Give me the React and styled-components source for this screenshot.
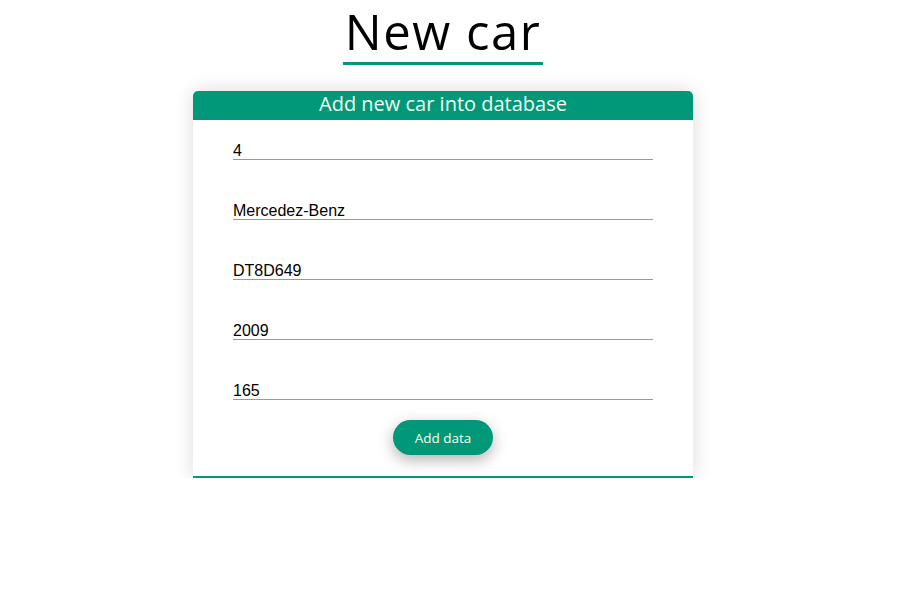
import styled, { createGlobalStyle } from "styled-components";

const GlobalStyle = createGlobalStyle`
  body {
    margin: 0;
    background: #fff;
    font-family: "Open Sans", sans-serif;
  }
`;

const fields = ["4", "Mercedez-Benz", "DT8D649", "2009", "165"];

const Page = styled.div`
  width: 886px;
  display: flex;
  flex-direction: column;
  align-items: center;
`;

const Title = styled.h1`
  margin: 0;
  font-family: "Open Sans", sans-serif;
  font-weight: 500;
  font-size: 49px;
  line-height: 62px;
  letter-spacing: 1.5px;
  color: #000;
  border-bottom: 3px solid #009879;
  padding: 0 2px;
`;

const Card = styled.div`
  width: 500px;
  margin-top: 26px;
  background: #fff;
  border-radius: 5px 5px 0 0;
  border-bottom: 2px solid #009879;
  box-shadow: 0 0 20px rgba(0, 0, 0, 0.15);
`;

const CardHeader = styled.div`
  height: 29px;
  line-height: 26px;
  background: #009879;
  color: #f4fbf2;
  text-align: center;
  font-size: 20px;
  border-radius: 5px 5px 0 0;
`;

const Form = styled.form`
  display: flex;
  flex-direction: column;
  align-items: center;
  gap: 40px;
  padding: 20px 0 21px;
`;

const Input = styled.input`
  width: 420px;
  box-sizing: border-box;
  height: 20px;
  padding: 2px 0 0;
  border: none;
  border-bottom: 1px solid #999;
  font-family: "Liberation Sans", Arial, sans-serif;
  font-size: 16px;
  line-height: 17px;
  color: #000;
  background: transparent;
  outline: none;
`;

const Button = styled.button`
  width: 100px;
  height: 35px;
  margin-top: -20px;
  border: none;
  border-radius: 18px;
  background: #009879;
  color: #fffbe8;
  font-family: "Open Sans", sans-serif;
  font-size: 13.5px;
  box-shadow: 0 5px 15px rgba(0, 0, 0, 0.3);
  cursor: pointer;
`;

export default function App() {
  return (
    <>
      <GlobalStyle />
      <Page>
        <Title>New car</Title>
        <Card>
          <CardHeader>Add new car into database</CardHeader>
          <Form onSubmit={(e) => e.preventDefault()}>
            {fields.map((v, i) => (
              <Input key={i} defaultValue={v} />
            ))}
            <Button type="submit">Add data</Button>
          </Form>
        </Card>
      </Page>
    </>
  );
}
